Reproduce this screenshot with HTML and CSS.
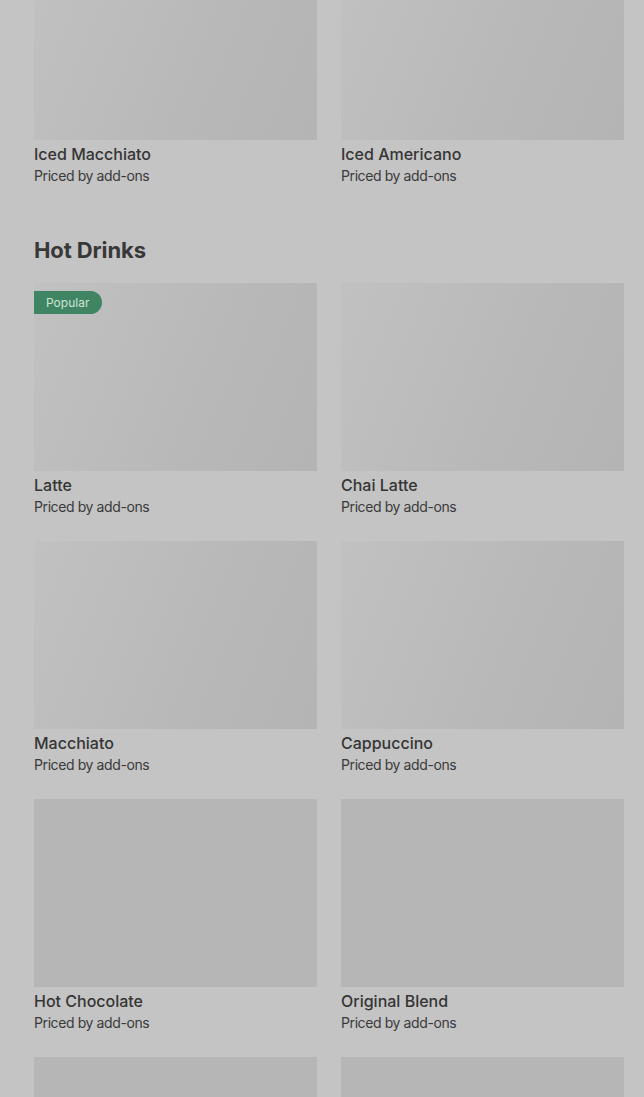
FILE: index.html
```html
<!DOCTYPE html>
<html lang="en">
<head>
    <meta charset="UTF-8">
    <meta name="viewport" content="width=device-width, initial-scale=1.0">
    <title>Menu</title>
    <link rel="stylesheet" href="styles.css">
</head>
<body>

<div class="menu">
    <section class="section section-scrolled">
        <div class="grid">
            <div class="item">
                <div class="thumb shimmer"></div>
                <div class="name">Iced Macchiato</div>
                <div class="price">Priced by add-ons</div>
            </div>
            <div class="item">
                <div class="thumb shimmer"></div>
                <div class="name">Iced Americano</div>
                <div class="price">Priced by add-ons</div>
            </div>
        </div>
    </section>

    <section class="section">
        <h2>Hot Drinks</h2>
        <div class="grid">
            <div class="item">
                <div class="thumb shimmer">
                    <span class="badge">Popular</span>
                </div>
                <div class="name">Latte</div>
                <div class="price">Priced by add-ons</div>
            </div>
            <div class="item">
                <div class="thumb shimmer"></div>
                <div class="name">Chai Latte</div>
                <div class="price">Priced by add-ons</div>
            </div>
            <div class="item">
                <div class="thumb shimmer"></div>
                <div class="name">Macchiato</div>
                <div class="price">Priced by add-ons</div>
            </div>
            <div class="item">
                <div class="thumb shimmer"></div>
                <div class="name">Cappuccino</div>
                <div class="price">Priced by add-ons</div>
            </div>
            <div class="item">
                <div class="thumb"></div>
                <div class="name">Hot Chocolate</div>
                <div class="price">Priced by add-ons</div>
            </div>
            <div class="item">
                <div class="thumb"></div>
                <div class="name">Original Blend</div>
                <div class="price">Priced by add-ons</div>
            </div>
            <div class="item">
                <div class="thumb"></div>
            </div>
            <div class="item">
                <div class="thumb"></div>
            </div>
        </div>
    </section>
</div>

</body>
</html>
```

FILE: styles.css
```css
body {
    margin: 0;
    background-color: #c4c4c4;
    color: #333;
    font-family: 'Inter', 'Roboto', 'Liberation Sans', sans-serif;
    overflow: hidden;
}

.menu {
    padding: 0 20px 0 34px;
}

.section-scrolled {
    margin-top: -48px;
}

.section h2 {
    font-size: 22px;
    font-weight: 700;
    letter-spacing: -0.1px;
    line-height: 30px;
    color: #383838;
    margin: 49px 0 18px;
}

.grid {
    display: grid;
    grid-template-columns: 1fr 1fr;
    column-gap: 24px;
    row-gap: 24px;
}

.thumb {
    position: relative;
    height: 188px;
    background-color: #b6b6b6;
}

.thumb.shimmer {
    background: linear-gradient(112deg, #c1c1c1 0%, #bcbcbc 35%, #b8b8b8 60%, #b4b4b4 100%);
}

.badge {
    position: absolute;
    top: 8px;
    left: 0;
    height: 23px;
    line-height: 23px;
    padding: 0 13px 0 12px;
    background-color: #3f8563;
    color: #cfe3d6;
    font-size: 12px;
    border-radius: 0 12px 12px 0;
}

.name {
    margin-top: 4px;
    font-size: 16px;
    font-weight: 500;
    line-height: 20px;
    color: #353535;
}

.price {
    margin-top: 2px;
    font-size: 14px;
    line-height: 20px;
    color: #3a3a3a;
    letter-spacing: -0.4px;
}
```
